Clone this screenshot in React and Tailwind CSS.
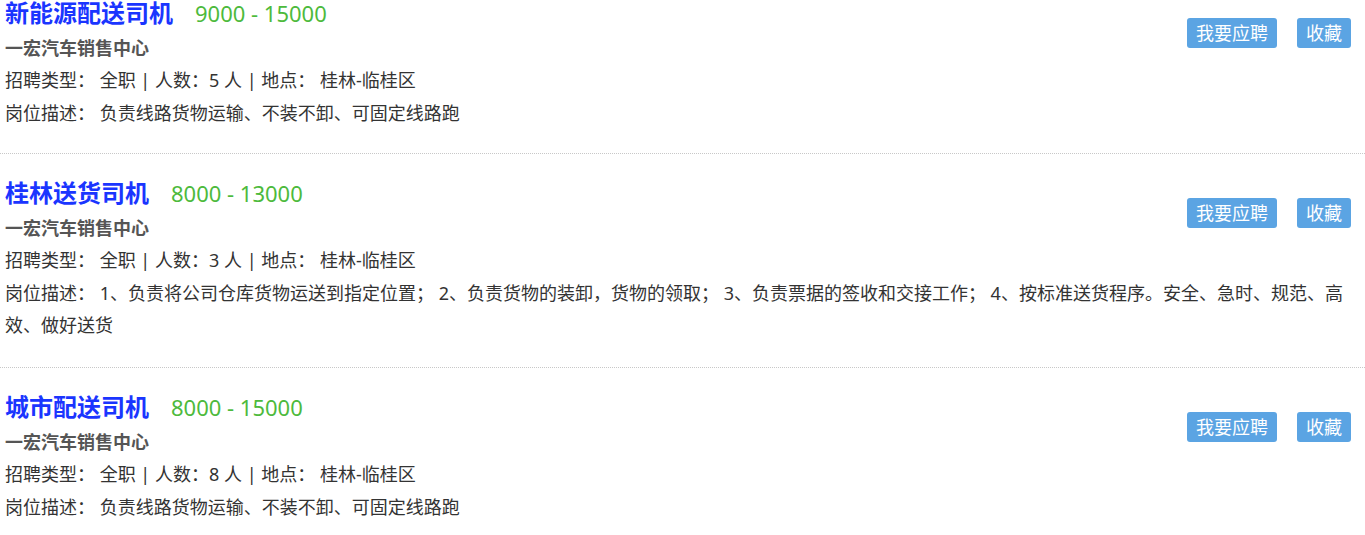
import React from 'react';

const jobs = [
  {
    id: 1,
    title: '新能源配送司机',
    salary: '9000 - 15000',
    company: '一宏汽车销售中心',
    count: 5,
    place: '桂林-临桂区',
    desc: '负责线路货物运输、不装不卸、可固定线路跑',
  },
  {
    id: 2,
    title: '桂林送货司机',
    salary: '8000 - 13000',
    company: '一宏汽车销售中心',
    count: 3,
    place: '桂林-临桂区',
    desc: '1、负责将公司仓库货物运送到指定位置； 2、负责货物的装卸，货物的领取； 3、负责票据的签收和交接工作； 4、按标准送货程序。安全、急时、规范、高效、做好送货',
  },
  {
    id: 3,
    title: '城市配送司机',
    salary: '8000 - 15000',
    company: '一宏汽车销售中心',
    count: 8,
    place: '桂林-临桂区',
    desc: '负责线路货物运输、不装不卸、可固定线路跑',
  },
];

const JobItem = ({ job, first }) => {
  return (
    <div
      className={
        'pl-[5px] pr-[10px] border-b border-dotted border-[#c8c8c8] ' +
        (first ? 'pt-0 pb-[24px]' : 'pt-[26px] pb-[26px]')
      }
    >
      <div className="float-right mt-[18px] mr-[4px] flex gap-[20px]">
        <button className="h-[30px] px-[9px] rounded-[3px] bg-[#5ba4e3] text-white text-[18px] leading-[30px]">
          我要应聘
        </button>
        <button className="h-[30px] px-[9px] rounded-[3px] bg-[#5ba4e3] text-white text-[18px] leading-[30px]">
          收藏
        </button>
      </div>
      <div className="flex items-center h-[26px] leading-[26px]">
        <span className="text-[24px] font-bold text-[#1a35ff]">{job.title}</span>
        <span className="ml-[22px] text-[22px] text-[#4dba3c]">{job.salary}</span>
      </div>
      <div className="mt-[6px] text-[18px] leading-[32px] font-bold text-[#555]">
        {job.company}
      </div>
      <div className="text-[18px] leading-[33px] text-[#333]">
        招聘类型： 全职 | 人数：{job.count} 人 | 地点： {job.place}
      </div>
      <div className="text-[18px] leading-[32px] text-[#333]">
        岗位描述： {job.desc}
      </div>
    </div>
  );
};

const App = () => {
  return (
    <div
      className="min-h-screen bg-white"
      style={{ fontFamily: '"Noto Sans", "Noto Sans CJK SC", sans-serif' }}
    >
      {jobs.map((job, i) => (
        <JobItem key={job.id} job={job} first={i === 0} />
      ))}
    </div>
  );
};

export default App;
